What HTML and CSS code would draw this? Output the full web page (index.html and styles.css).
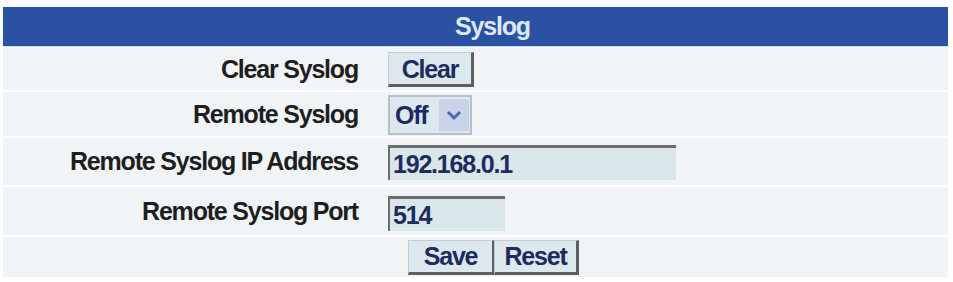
FILE: index.html
```html
<!DOCTYPE html>
<html>
<head>
<meta charset="utf-8">
<link rel="stylesheet" href="styles.css">
</head>
<body>
<div class="panel">
  <div class="title">Syslog</div>
  <div class="row r1">
    <div class="label">Clear Syslog</div>
    <div class="value"><button class="btn btn-clear">Clear</button></div>
  </div>
  <div class="row r2">
    <div class="label">Remote Syslog</div>
    <div class="value">
      <div class="select"><span class="sel-text">Off</span><span class="sel-arrow"><svg width="18" height="12" viewBox="0 0 18 12"><path d="M3 3 L9 9 L15 3" fill="none" stroke="#4a6ab0" stroke-width="3"/></svg></span></div>
    </div>
  </div>
  <div class="row r3">
    <div class="label">Remote Syslog IP Address</div>
    <div class="value"><div class="input input-ip">192.168.0.1</div></div>
  </div>
  <div class="row r4">
    <div class="label">Remote Syslog Port</div>
    <div class="value"><div class="input input-port">514</div></div>
  </div>
  <div class="row r5 actions">
    <button class="btn btn-save">Save</button><button class="btn btn-reset">Reset</button>
  </div>
</div>
</body>
</html>
```
FILE: styles.css
```css
html, body {
  margin: 0;
  padding: 0;
  background: #ffffff;
}
body {
  font-family: "Liberation Sans", Arial, sans-serif;
  font-weight: bold;
  font-size: 25px;
  letter-spacing: -1.2px;
}
.panel {
  margin: 7px 5px 0 3px;
  display: flex;
  flex-direction: column;
  gap: 2px;
}
.title {
  height: 39px;
  background: #2a51a2;
  color: #dce8f7;
  text-align: center;
  line-height: 39px;
  padding-left: 34px;
  box-shadow: 0 1px 0 #cfe0f3;
}
.row {
  display: grid;
  grid-template-columns: 372px 1fr;
  background: #f1f4f7;
  align-items: center;
}
.r1 { height: 42px; }
.r2 { height: 44px; }
.r3 { height: 47px; }
.r4 { height: 48px; }
.r5 { height: 40px; }
.label {
  text-align: right;
  padding-right: 17px;
  color: #1e1e1e;
}
.value {
  padding-left: 13px;
  display: flex;
  align-items: center;
}
.btn {
  font-family: "Liberation Sans", Arial, sans-serif;
  font-weight: bold;
  font-size: 25px;
  letter-spacing: -1.2px;
  color: #1e2b5e;
  background: #dce8ee;
  border-style: solid;
  border-width: 1px 3px 3px 1px;
  border-color: #c3ccd4 #5a5f66 #5a5f66 #c3ccd4;
  padding: 0;
  margin: 0;
  height: 35px;
  line-height: 30px;
}
.btn-clear {
  width: 86px;
  margin-top: 1px;
}
.select {
  width: 84px;
  height: 40px;
  box-sizing: border-box;
  border: 2px solid #b7c0c8;
  background: #dce8ee;
  display: flex;
  align-items: stretch;
  color: #1e2b5e;
  margin-top: 2px;
}
.sel-text {
  flex: 1;
  padding-left: 5px;
  line-height: 36px;
}
.sel-arrow {
  width: 30px;
  margin: 2px 1px 2px 0;
  background: #c9d2e6;
  display: flex;
  align-items: center;
  justify-content: center;
}
.input {
  box-sizing: border-box;
  height: 35px;
  background: #d9e7ea;
  border-top: 3px solid #6a6d70;
  border-left: 2px solid #6a6d70;
  color: #1e2b5e;
  padding-left: 3px;
  line-height: 32px;
}
.input-ip {
  width: 288px;
  margin-top: 2px;
}
.input-port {
  width: 117px;
  margin-top: 4px;
}
.actions {
  display: flex;
  padding-left: 405px;
  align-items: center;
}
.btn-save {
  width: 86px;
  border-right-width: 2px;
}
.btn-reset {
  width: 85px;
}
```
